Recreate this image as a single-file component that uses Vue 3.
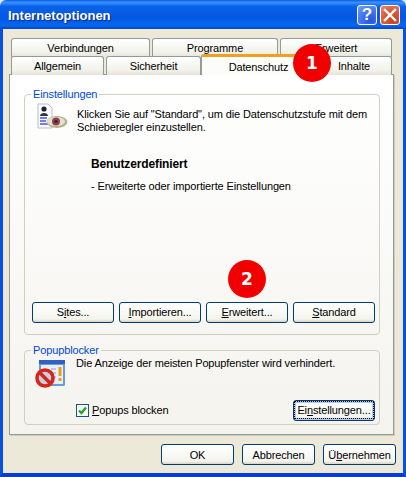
<template>
  <div class="window">
    <header class="titlebar">
      <span class="title">Internetoptionen</span>
      <div class="caption-btns">
        <button class="caption-btn help">?</button>
        <button class="caption-btn close">
          <svg width="14" height="14" viewBox="0 0 14 14">
            <path d="M2 2 L12 12 M12 2 L2 12" stroke="#fff" stroke-width="2.4" stroke-linecap="square" />
          </svg>
        </button>
      </div>
    </header>

    <div class="client">
      <div class="tabs">
        <div class="tab-row">
          <div v-for="tab in topTabs" :key="tab.label" class="tab" :style="{ width: tab.width + 'px' }">{{ tab.label }}</div>
        </div>
        <div class="tab-row">
          <div
            v-for="tab in bottomTabs"
            :key="tab.label"
            class="tab"
            :class="{ 'tab--active': tab.active }"
            :style="{ width: tab.width + 'px' }"
          >{{ tab.label }}</div>
        </div>
        <span class="badge badge-one">1</span>
      </div>

      <div class="panel">
        <fieldset class="group group-settings">
          <legend>Einstellungen</legend>
          <div class="intro">
            <svg class="icon" width="32" height="28" viewBox="0 0 32 28">
              <path d="M2 1 H12 L16 5 V25 H2 Z" fill="#fbfbff" stroke="#b9bdd0" stroke-width="1" />
              <circle cx="8" cy="6" r="2.6" fill="#20242c" />
              <path d="M4 13 C4 9 12 9 12 13 Z" fill="#30343e" />
              <path d="M4 15 H11 M4 18 H10 M4 21 H12" stroke="#4a55e8" stroke-width="1.4" />
              <ellipse cx="21" cy="19" rx="10.5" ry="6" fill="#b9b08a" />
              <ellipse cx="20" cy="18.5" rx="9" ry="4.6" fill="#e4e0cf" />
              <circle cx="20" cy="18.5" r="4" fill="#8d4452" />
              <circle cx="20" cy="18.5" r="1.7" fill="#50202c" />
            </svg>
            <p class="intro-text">Klicken Sie auf "Standard", um die Datenschutzstufe mit dem Schieberegler einzustellen.</p>
          </div>
          <div class="level">
            <strong class="level-name">Benutzerdefiniert</strong>
            <p class="level-desc">- Erweiterte oder importierte Einstellungen</p>
          </div>
          <div class="actions">
            <button class="btn"><span>S<u>i</u>tes...</span></button>
            <button class="btn"><span><u>I</u>mportieren...</span></button>
            <button class="btn"><span><u>E</u>rweitert...</span></button>
            <button class="btn"><span><u>S</u>tandard</span></button>
          </div>
          <span class="badge badge-two">2</span>
        </fieldset>

        <fieldset class="group group-popup">
          <legend>Popupblocker</legend>
          <div class="popup-top">
            <svg class="icon icon-popup" width="32" height="30" viewBox="0 0 32 30">
              <rect x="4" y="0" width="26" height="26" rx="1.5" fill="#6c9ade" />
              <rect x="4" y="0" width="26" height="4" fill="#2f62c4" />
              <rect x="6" y="5" width="22" height="19" fill="#e9eff8" />
              <path d="M16 9 H21 M17 13 H21 M18 17 H21" stroke="#a9bbd8" stroke-width="1.5" />
              <path d="M25 7 V16 M25 18 V21" stroke="#f29a10" stroke-width="3" />
              <circle cx="10" cy="18" r="8" fill="#c6d0e2" stroke="#d5261a" stroke-width="3.6" />
              <path d="M4.5 12.5 L15.5 23.5" stroke="#d5261a" stroke-width="3.6" />
            </svg>
            <p class="popup-text">Die Anzeige der meisten Popupfenster wird verhindert.</p>
          </div>
          <div class="popup-bottom">
            <label class="check">
              <span class="check-box">
                <svg width="11" height="11" viewBox="0 0 11 11">
                  <path d="M2 5.5 L4.5 8 L9 2.5" fill="none" stroke="#21a121" stroke-width="2.2" />
                </svg>
              </span>
              <span><u>P</u>opups blocken</span>
            </label>
            <button class="btn btn--focus"><span>Ei<u>n</u>stellungen...</span></button>
          </div>
        </fieldset>
      </div>

      <div class="footer">
        <button class="btn btn-ok"><span>OK</span></button>
        <button class="btn btn-cancel"><span>Abbrechen</span></button>
        <button class="btn btn-apply"><span>Ü<u>b</u>ernehmen</span></button>
      </div>
    </div>
  </div>
</template>

<script setup>
const topTabs = [
  { label: 'Verbindungen', width: 139 },
  { label: 'Programme', width: 126 },
  { label: 'Erweitert', width: 112 }
]

const bottomTabs = [
  { label: 'Allgemein', width: 93 },
  { label: 'Sicherheit', width: 95 },
  { label: 'Datenschutz', width: 115, active: true },
  { label: 'Inhalte', width: 76 }
]
</script>

<style>
html,
body {
  margin: 0;
  background: #0a3ccf;
}
</style>

<style scoped>
.window {
  width: 406px;
  height: 477px;
  box-sizing: border-box;
  display: flex;
  flex-direction: column;
  font-family: "Liberation Sans", Arial, sans-serif;
  font-size: 11px;
  letter-spacing: -0.13px;
  color: #000;
  overflow: hidden;
  background: #ece9d8;
}

.titlebar {
  height: 29px;
  flex: none;
  display: flex;
  align-items: center;
  justify-content: space-between;
  padding: 0 6px 0 8px;
  background: linear-gradient(#0a5ae6 0%, #3a93ff 8%, #0a62ea 22%, #0457e2 60%, #0667f0 88%, #0346c8 100%);
  border-radius: 6px 6px 0 0;
}

.title {
  color: #fff;
  font-size: 13px;
  font-weight: 700;
  letter-spacing: 0;
  padding-top: 2px;
  text-shadow: 1px 1px 1px #0a2a80;
}

.caption-btns {
  display: flex;
  gap: 3px;
}

.caption-btn {
  width: 20px;
  height: 20px;
  padding: 0;
  border: 1px solid #fff;
  border-radius: 3px;
  display: flex;
  align-items: center;
  justify-content: center;
  font-family: "Liberation Sans", Arial, sans-serif;
}

.help {
  background: radial-gradient(circle at 70% 80%, #2a56d8, #4a7cf0 60%, #7aa2f5);
  color: #fff;
  font-size: 17px;
  font-weight: 700;
}

.close {
  background: radial-gradient(circle at 70% 80%, #c8421c, #e0603c 60%, #ec8c6c);
}

.client {
  flex: 1;
  display: flex;
  flex-direction: column;
  padding: 9px 3px 4px 6px;
  border-left: 3px solid #0a50e0;
  border-right: 3px solid #0a50e0;
  border-bottom: 4px solid #0a3ccf;
  box-sizing: border-box;
}

.tabs {
  position: relative;
  padding: 0 0 0 2px;
  height: 36px;
  flex: none;
}

.tab-row {
  display: flex;
  gap: 2px;
  height: 18px;
}

.tab {
  box-sizing: border-box;
  height: 19px;
  border: 1px solid #919b9c;
  border-bottom: none;
  border-radius: 3px 3px 0 0;
  background: linear-gradient(#fff, #f3f3ec 70%, #e6e4d9);
  text-align: center;
  line-height: 18px;
}

.tab--active {
  position: relative;
  z-index: 2;
  height: 21px;
  margin: -2px -2px 0 -2px;
  border-top: 3px solid #f0a020;
  background: #fcfcfa;
  line-height: 20px;
}

.panel {
  width: 385px;
  height: 361px;
  box-sizing: border-box;
  flex: none;
  padding: 13px 13px 9px 14px;
  border: 1px solid #919b9c;
  background: linear-gradient(#fff, #f4f3ee);
  box-shadow: 1px 1px 0 #d0cdbc;
  display: flex;
  flex-direction: column;
  gap: 9px;
}

.group {
  position: relative;
  margin: 0;
  min-width: 0;
  box-sizing: border-box;
  border: 1px solid #d0d0bf;
  border-radius: 4px;
  padding: 0 4px 0 7px;
}

.group legend {
  padding: 0 2px;
  margin-left: -1px;
  color: #0046d5;
  line-height: 13px;
}

.group-settings {
  height: 249px;
  display: flex;
  flex-direction: column;
}

.group-popup {
  height: 82px;
  display: flex;
  flex-direction: column;
}

.intro {
  display: flex;
  align-items: flex-start;
  height: 50px;
  padding: 2px 0 0 4px;
  box-sizing: border-box;
}

.icon {
  flex: none;
  margin-right: 9px;
}

.intro-text {
  margin: 5px 0 0;
  line-height: 13px;
  width: 292px;
}

.level {
  padding-left: 59px;
  margin-top: 7px;
}

.level-name {
  display: block;
  line-height: 13px;
  font-size: 12px;
}

.level-desc {
  margin: 9px 0 0;
  line-height: 13px;
}

.actions {
  margin-top: auto;
  margin-bottom: 11px;
  display: flex;
  justify-content: space-between;
}

.btn {
  width: 82px;
  height: 21px;
  padding: 0;
  border: 1px solid #003c74;
  border-radius: 3px;
  background: linear-gradient(#fff, #f4f4ee 85%, #d8d4c6);
  font-family: "Liberation Sans", Arial, sans-serif;
  font-size: 11px;
  letter-spacing: -0.13px;
  color: #000;
}

.btn--focus {
  box-shadow: inset 0 0 0 2px #b0c8ec;
}

.btn--focus span {
  outline: 1px dotted #000;
  outline-offset: 2px;
}

.popup-top {
  display: flex;
  align-items: flex-start;
  padding: 0 0 0 3px;
  height: 34px;
}

.icon-popup {
  margin-top: 3px;
}

.popup-text {
  margin: 0;
  line-height: 13px;
}

.popup-bottom {
  display: flex;
  align-items: center;
  justify-content: space-between;
  padding-left: 44px;
  margin-top: 9px;
}

.check {
  display: flex;
  align-items: center;
  gap: 3px;
}

.check-box {
  width: 13px;
  height: 13px;
  box-sizing: border-box;
  border: 1px solid #1c5180;
  background: #f6f6f2;
  display: flex;
  align-items: center;
  justify-content: center;
}

.footer {
  display: flex;
  justify-content: flex-end;
  margin-top: 9px;
  gap: 8px;
  padding-right: 4px;
}

.footer .btn {
  width: 73px;
}

.badge {
  position: absolute;
  width: 38px;
  height: 38px;
  border-radius: 50%;
  background: #f00000;
  color: #fff;
  font-family: "DejaVu Sans", Verdana, sans-serif;
  font-size: 17px;
  font-weight: 700;
  letter-spacing: 0;
  display: flex;
  align-items: center;
  justify-content: center;
  z-index: 5;
}

.badge-one {
  left: 284px;
  top: 6px;
}

.badge-two {
  left: 203px;
  top: 159px;
}
</style>
